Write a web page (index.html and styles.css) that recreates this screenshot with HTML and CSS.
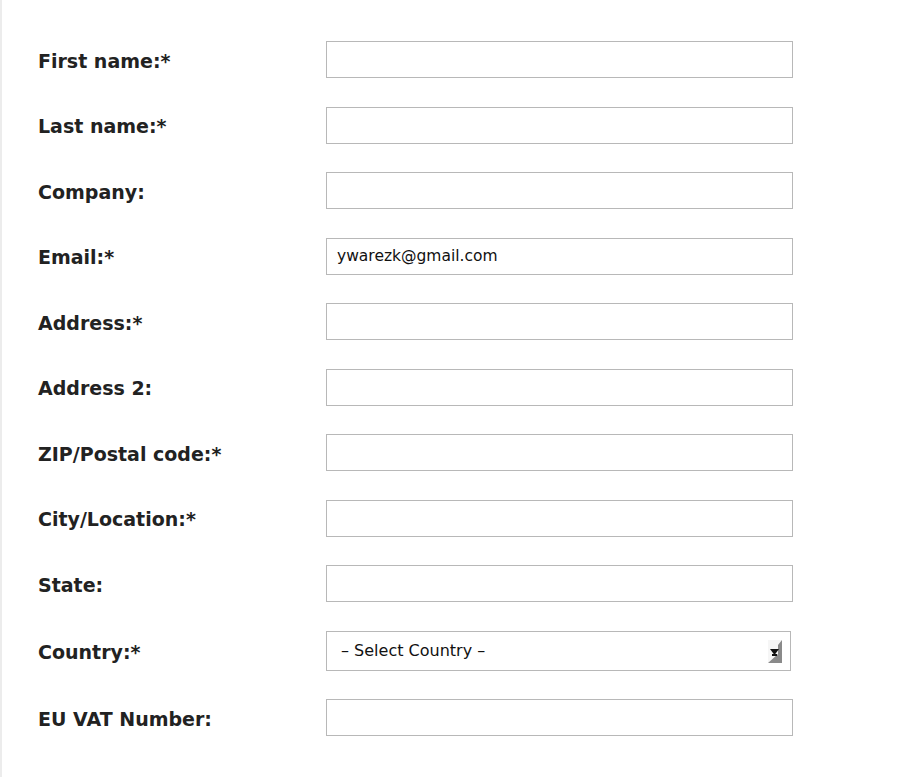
FILE: index.html
```html
<!DOCTYPE html>
<html>
<head>
<meta charset="utf-8">
<link rel="stylesheet" href="styles.css">
</head>
<body>
<div class="page">
  <form class="form">
    <label class="label">First name:*</label>
    <input class="field" type="text">
    <label class="label">Last name:*</label>
    <input class="field" type="text">
    <label class="label">Company:</label>
    <input class="field" type="text">
    <label class="label">Email:*</label>
    <input class="field" type="text" value="ywarezk@gmail.com">
    <label class="label">Address:*</label>
    <input class="field" type="text">
    <label class="label">Address 2:</label>
    <input class="field" type="text">
    <label class="label">ZIP/Postal code:*</label>
    <input class="field" type="text">
    <label class="label">City/Location:*</label>
    <input class="field" type="text">
    <label class="label">State:</label>
    <input class="field" type="text">
    <label class="label">Country:*</label>
    <div class="select-wrap">
      <select class="select"><option>– Select Country –</option></select>
      <svg class="arrow" width="14" height="23" viewBox="0 0 14 23">
        <rect x="0" y="0" width="14" height="23" fill="#f6f6f6"/>
        <polygon points="14,0 14,23 0,23 10,14 10,5" fill="#8a8a8a"/>
        <polygon points="2,9 11,9 6.5,15" fill="#111"/>
        <rect x="4" y="14" width="5" height="2" fill="#111"/>
      </svg>
    </div>
    <label class="label">EU VAT Number:</label>
    <input class="field" type="text">
  </form>
</div>
</body>
</html>
```
FILE: styles.css
```css
html, body {
  margin: 0;
  padding: 0;
  background: #fff;
}
.page {
  border-left: 2px solid #ececec;
  min-height: 777px;
  box-sizing: border-box;
  padding: 41px 0 0 36px;
}
.form {
  display: grid;
  grid-template-columns: 288px 467px;
  row-gap: 28.5px;
  align-items: center;
}
.label {
  font-family: "DejaVu Sans", sans-serif;
  font-weight: bold;
  font-size: 19px;
  color: #222;
  padding-top: 2px;
}
.field {
  box-sizing: border-box;
  width: 467px;
  height: 37px;
  margin: 0;
  border: 1px solid #b8b8b8;
  padding: 0 10px;
  font-family: "DejaVu Sans", sans-serif;
  font-size: 15.5px;
  color: #111;
  outline: none;
}
.select-wrap {
  position: relative;
  width: 465px;
  height: 40px;
}
.select {
  appearance: none;
  -webkit-appearance: none;
  box-sizing: border-box;
  width: 465px;
  height: 40px;
  margin: 0;
  border: 1px solid #b8b8b8;
  border-radius: 0;
  background: #fff;
  padding: 0 14px;
  font-family: "DejaVu Sans", sans-serif;
  font-size: 16px;
  color: #111;
}
.arrow {
  position: absolute;
  right: 9px;
  top: 9px;
}
```
